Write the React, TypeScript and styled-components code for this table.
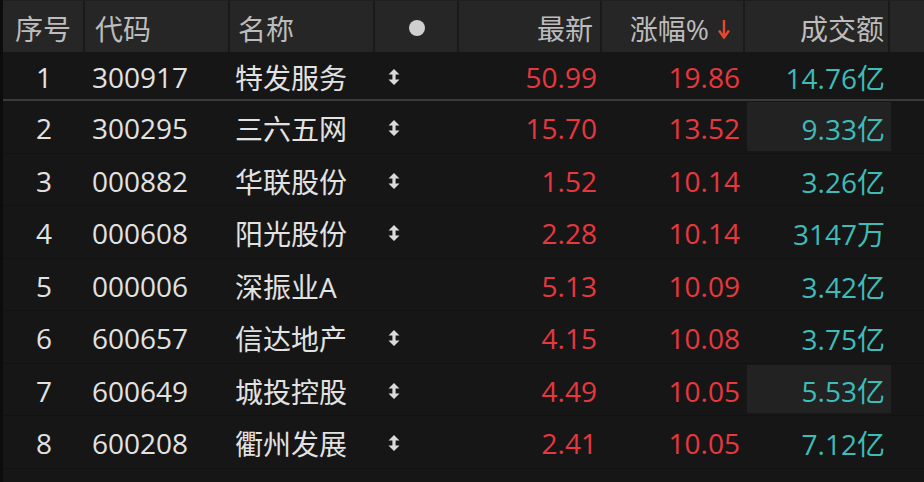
import React from "react";
import styled, { createGlobalStyle } from "styled-components";

const Global = createGlobalStyle`
  html, body { margin: 0; padding: 0; background: #161616; }
  body { font-family: "Open Sans", "Noto Sans CJK SC", sans-serif; }
`;

const COLS = "80px 145px 145px 84px 143px 143px 145px 36px";

const Table = styled.div`
  width: 924px;
  height: 482px;
  background: #161616;
  overflow: hidden;
  box-sizing: border-box;
  border-left: 3px solid #0c0c0c;
`;

const HeaderRow = styled.div`
  display: grid;
  grid-template-columns: ${COLS};
  height: 52px;
  background: #262626;
  border-top: 1px solid #1e1e1e;
  box-sizing: border-box;
`;

type Align = "left" | "center" | "right";

const HeadCell = styled.div<{ $align: Align; $pl?: number; $pr?: number; $first?: boolean }>`
  display: flex;
  align-items: center;
  justify-content: ${(p) =>
    p.$align === "left" ? "flex-start" : p.$align === "right" ? "flex-end" : "center"};
  padding-left: ${(p) => p.$pl ?? 0}px;
  padding-right: ${(p) => p.$pr ?? 0}px;
  border-left: ${(p) => (p.$first ? "none" : "2px solid #1a1a1a")};
  color: #bcbcbc;
  font-size: 28px;
  padding-top: 2px;
  box-sizing: border-box;
  white-space: nowrap;
`;

const Row = styled.div<{ $top?: boolean }>`
  display: grid;
  grid-template-columns: ${COLS};
  height: ${(p) => (p.$top ? "49px" : "52.5px")};
  box-sizing: border-box;
  border-bottom: ${(p) => (p.$top ? "2px solid #3a3a3a" : "1px solid #111111")};
  background: #161616;
`;

const Cell = styled.div<{
  $align: Align;
  $pl?: number;
  $pr?: number;
  $color?: string;
  $hl?: boolean;
}>`
  display: flex;
  align-items: center;
  justify-content: ${(p) =>
    p.$align === "left" ? "flex-start" : p.$align === "right" ? "flex-end" : "center"};
  padding-left: ${(p) => p.$pl ?? 0}px;
  padding-right: ${(p) => (p.$hl ? (p.$pr ?? 0) + 3 : p.$pr ?? 0)}px;
  padding-top: 3px;
  margin: ${(p) => (p.$hl ? "1px -3px 2px 4px" : "0")};
  color: ${(p) => p.$color ?? "#e2e2e2"};
  background: ${(p) => (p.$hl ? "#222222" : "transparent")};
  font-size: 28px;
  box-sizing: border-box;
  white-space: nowrap;
`;

const Dot = styled.span`
  width: 16px;
  height: 16px;
  border-radius: 50%;
  background: #cfcfcf;
  display: inline-block;
`;

const SortArrow = styled.svg`
  margin-left: 9px;
  margin-top: 2px;
`;

const RED = "#e8373f";
const CYAN = "#3dbcb8";

const SwapIcon = () => (
  <svg width="12" height="16" viewBox="0 0 12 16">
    <path
      d="M6 0 L11.5 5.6 H7.6 V10.4 H11.5 L6 16 L0.5 10.4 H4.4 V5.6 H0.5 Z"
      fill="#dadada"
    />
  </svg>
);

type Item = {
  n: string;
  code: string;
  name: string;
  icon: boolean;
  price: string;
  pct: string;
  vol: string;
  hl?: boolean;
};

const data: Item[] = [
  { n: "1", code: "300917", name: "特发服务", icon: true, price: "50.99", pct: "19.86", vol: "14.76亿" },
  { n: "2", code: "300295", name: "三六五网", icon: true, price: "15.70", pct: "13.52", vol: "9.33亿", hl: true },
  { n: "3", code: "000882", name: "华联股份", icon: true, price: "1.52", pct: "10.14", vol: "3.26亿" },
  { n: "4", code: "000608", name: "阳光股份", icon: true, price: "2.28", pct: "10.14", vol: "3147万" },
  { n: "5", code: "000006", name: "深振业A", icon: false, price: "5.13", pct: "10.09", vol: "3.42亿" },
  { n: "6", code: "600657", name: "信达地产", icon: true, price: "4.15", pct: "10.08", vol: "3.75亿" },
  { n: "7", code: "600649", name: "城投控股", icon: true, price: "4.49", pct: "10.05", vol: "5.53亿", hl: true },
  { n: "8", code: "600208", name: "衢州发展", icon: true, price: "2.41", pct: "10.05", vol: "7.12亿" },
];

export default function App() {
  return (
    <>
      <Global />
      <Table>
        <HeaderRow>
          <HeadCell $align="center" $first>序号</HeadCell>
          <HeadCell $align="left" $pl={10}>代码</HeadCell>
          <HeadCell $align="left" $pl={8}>名称</HeadCell>
          <HeadCell $align="center" $pl={2}>
            <Dot />
          </HeadCell>
          <HeadCell $align="right" $pr={7}>最新</HeadCell>
          <HeadCell $align="right" $pr={13}>
            涨幅%
            <SortArrow width="12" height="20" viewBox="0 0 12 20">
              <path d="M6 1 V17" stroke="#e5472f" strokeWidth="2.4" />
              <path d="M1 11.5 L6 18.5 L11 11.5" stroke="#e5472f" strokeWidth="2.4" fill="none" />
            </SortArrow>
          </HeadCell>
          <HeadCell $align="right" $pr={4}>成交额</HeadCell>
          <HeadCell $align="center" />
        </HeaderRow>
        {data.map((d, i) => (
          <Row key={d.n} $top={i === 0}>
            <Cell $align="center" $pl={2}>{d.n}</Cell>
            <Cell $align="left" $pl={9}>{d.code}</Cell>
            <Cell $align="left" $pl={7}>{d.name}</Cell>
            <Cell $align="left" $pl={15}>{d.icon ? <SwapIcon /> : null}</Cell>
            <Cell $align="right" $pr={3} $color={RED}>{d.price}</Cell>
            <Cell $align="right" $pr={3} $color={RED}>{d.pct}</Cell>
            <Cell $align="right" $pr={3} $color={CYAN} $hl={d.hl}>{d.vol}</Cell>
            <Cell $align="center" />
          </Row>
        ))}
      </Table>
    </>
  );
}
